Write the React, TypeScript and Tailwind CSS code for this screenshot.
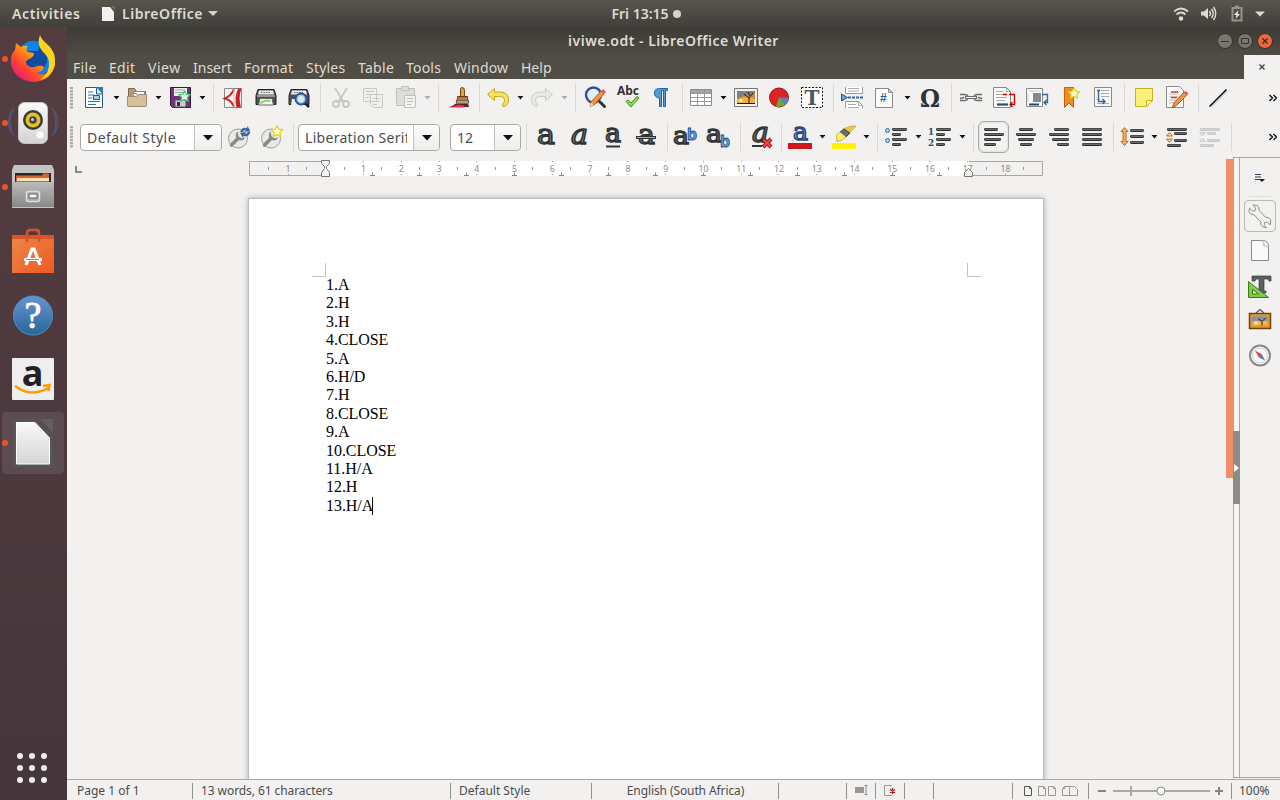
import React from "react";

const ink = "#2e3436";

function Glyph({ ch = "a", x = 2, y = 19, size = 28, width = 18, italic = false, fill = "#777c7d", stroke = ink }: { ch?: string; x?: number; y?: number; size?: number; width?: number; italic?: boolean; fill?: string; stroke?: string }) {
  return (
    <text x={x} y={y} fontSize={size} textLength={width} lengthAdjust="spacingAndGlyphs" fontFamily="DejaVu Serif, serif" fontStyle={italic ? "italic" : "normal"} fill={fill} stroke={stroke} strokeWidth="1.500">
      {ch}
    </text>
  );
}

function Bars({ rows }: { rows: [number, number, number][] }) {
  return (
    <g>
      {rows.map(([x, y, w]) => (
        <g key={y}>
          <rect x={x} y={y} width={w} height="3" rx="1.4" fill="#2a2e2f" />
          <rect x={x + 1} y={y + 0.7} width={w - 2} height="1" fill="#868888" />
        </g>
      ))}
    </g>
  );
}

const sheet = <path d="M3.5 2.5h13l4 4v15h-17z" fill="#fafafa" stroke="#888a85" />;
const fold = <path d="M16.5 2.5v4h4z" fill="#d3d7cf" stroke="#888a85" />;
const star = <path d="m17.5 1.500 1.800 3.200 3.700.6-2.600 2.700.5 3.600-3.400-1.600-3.400 1.600.5-3.600L12 5.300l3.700-.6z" />;
const wrenchDisc = (
  <g>
    <circle cx="11" cy="13.500" r="9.500" fill="#e9eae7" stroke="#9b9d99" />
    <path d="m4.500 20 6.500-6.500" stroke="#878a87" strokeWidth="3.600" strokeLinecap="round" />
    <path d="M11 6.500q-3 2-2 5.500 1 3.500 5 3.500 3 0 4-3l-3 .8-3-1.300-1-2.800z" fill="#878a87" />
  </g>
);

const art: Record<string, React.ReactNode> = {
  new: (
    <g>
      <path d="M3.500 1.500h12l5 6v14h-17z" fill="#fff" stroke="#1b5f8c" />
      <path d="M14 1h7v7z" fill="#2b7db0" />
      <path d="M14.500 2v6h6" fill="#dcecf5" stroke="#1b5f8c" />
      <path d="M6 6h5M6 9h6M6 12h4M6 15.500h12M6 18.500h8" stroke="#31789f" strokeWidth="1.200" />
      <path d="M11.500 9.500h6v4h-6z" fill="#9fd0ef" stroke="#17608f" />
    </g>
  ),
  open: (
    <g>
      <path d="M3.500 20.500v-18h6l2 3h9v15z" fill="#b59a70" stroke="#7e6b4d" />
      <path d="M8.500 5.500h11v9h-11z" fill="#fff" stroke="#888" />
      <path d="M6.500 7.500h5l1 2v2" fill="#eee" stroke="#888" />
      <path d="M2.500 10.500h9l2-2h8v11q0 1-1 1h-17q-1 0-1-1z" fill="#d6c09c" stroke="#a38c68" />
    </g>
  ),
  save: (
    <g>
      <path d="M2.500 1.500h20v20h-18l-2-2z" fill="#75307f" stroke="#3c1545" />
      <path d="M6 2h13v8H6z" fill="#eee" />
      <path d="M7 4h10M7 6.500h8" stroke="#aaa" />
      <path d="M7 14h11v7H7z" fill="#ccc" stroke="#555" />
      <path d="M9 16h3v4H9z" fill="#4c1859" />
      <g transform="translate(-1 3.500)" fill="#fff" stroke="#38d365" strokeWidth="1.300">{star}</g>
    </g>
  ),
  pdf: (
    <g>
      <path d="M4.500 2.500h17v19h-17z" fill="#f5f3f2" stroke="#8a8a8a" />
      <path d="M15.500 2.500h6Q18 11 21 21.500h-4.500Q14 11 18 3z" fill="#cc2024" />
      <path d="M14 3Q12 9 5 12.500q6 1.500 9 8" fill="none" stroke="#cc2024" strokeWidth="2" />
      <path d="M14 3v17" stroke="#e8b9ba" />
    </g>
  ),
  print: (
    <g>
      <path d="M4 3.500h16l2 6v9H2v-9z" fill="#4c5152" stroke="#222" />
      <path d="M5 4.500h14l1 4H4z" fill="#ececea" />
      <path d="M7 6.500h10" stroke="#666" strokeDasharray="1.500 1" />
      <path d="M3 10h18" stroke="#ddd" />
      <path d="M6 12.500h12l1.500 6.500h-15z" fill="#f8f8f6" stroke="#666" />
      <path d="M6.500 17.500q4-4 10-2.500" stroke="#8bd27b" strokeWidth="2" fill="none" />
    </g>
  ),
  preview: (
    <g>
      <path d="M4 3.500h16l2 6v9H2v-9z" fill="#4c5152" stroke="#222" />
      <path d="M5 4.500h14l1 4H4z" fill="#ececea" />
      <path d="M7 6.500h10" stroke="#666" strokeDasharray="1.500 1" />
      <path d="M5 13h10v6H4z" fill="#eee" />
      <circle cx="14" cy="13" r="5.500" fill="#abc5e5" stroke="#2b51a3" strokeWidth="2" />
      <circle cx="14" cy="13" r="3" fill="#dcefdc" />
      <path d="m18.500 17.500 3.500 3.500" stroke="#222" strokeWidth="2.500" />
    </g>
  ),
  cut: (
    <g fill="none" stroke="#c6c7c5" strokeWidth="1.800">
      <path d="m6 2 8 13M18 2l-8 13" />
      <circle cx="7" cy="18" r="3" />
      <circle cx="17" cy="18" r="3" />
      <path d="m10 16 2-2 2 2" />
    </g>
  ),
  copy: (
    <g fill="#f0f0ef" stroke="#c6c7c5">
      <path d="M2.500 2.500h13v13h-13zM9.500 8.500h12v13h-9l-3-3z" />
      <path d="M5 5.500h8M5 8.500h4M5 11.500h3M12 12.500h7M12 15.500h7M12 18.500h4" />
    </g>
  ),
  paste: (
    <g fill="#dddddb" stroke="#c0c1bf">
      <path d="M2.500 2.500h18v17h-18z" />
      <path d="M7.500.5h7v4h-7z" />
      <path d="M10.500 9.500h11v12h-11z" fill="#f2f2f0" />
      <path d="M13 12.500h6M13 15.500h6M13 18.500h4" />
    </g>
  ),
  brush: (
    <g>
      <path d="M15 1.500q2.500 0 2.500 3v7h-4v-8q0-2 1.500-2z" fill="#dfa04f" stroke="#754214" />
      <path d="M10.500 12.500v-2h10v2l1 3h-12z" fill="#b77a37" stroke="#623810" />
      <path d="M9.500 15h12v2h-12z" fill="#eee" stroke="#555" />
      <path d="M9 17.500h12l1 3.500H2q4-1 7-3.500z" fill="#5b2027" />
      <path d="M0 21.500h18l-1-2-6-1q-3 2-11 3z" fill="#f03246" />
    </g>
  ),
  undo: <path d="M1.500 8.500 8.500 2.500v3.500H15q7.500 1 7.500 7.500t-5.500 7l-.5-2.500q2.500-1.500 2-4.500t-4-3H8.500v4z" fill="#f5e06a" stroke="#c4a80c" />,
  redo: <path d="M22.500 8.500 15.500 2.500v3.500H9q-7.500 1-7.500 7.500t5.500 7l.5-2.500q-2.500-1.500-2-4.500t4-3h6v4z" fill="#e9eae8" stroke="#cacbc9" />,
  find: (
    <g>
      <circle cx="10.500" cy="9" r="7.500" fill="#e3eef7" stroke="#2c529b" strokeWidth="2.400" />
      <path d="m17 16 4.500 4.500" stroke="#303336" strokeWidth="3" strokeLinecap="round" />
      <path d="m8 16 10-11 3 3L11 19l-4 1.500z" fill="#f7953e" stroke="#9e4e14" strokeWidth=".8" />
      <path d="m18 5 2-2 3 3-2 2z" fill="#e45763" />
      <path d="m8 16.500 2.500 2.500-3.500 1.500z" fill="#f7dfac" />
    </g>
  ),
  spell: (
    <g>
      <text x="1" y="9" fontSize="12" textLength="22" lengthAdjust="spacingAndGlyphs" fontWeight="bold" fontFamily="Noto Sans, sans-serif" fill="#333">Abc</text>
      <path d="m10 15.500 2-1.500 3 3 6-6.500 2 1.500-8 9z" fill="#8be052" stroke="#3c8e13" />
    </g>
  ),
  pilcrow: <path d="M18.500 2.500h-8q-5 0-5 4.500t5 5v8.500h2v-16h2v16h2v-16h2z" fill="#549bd2" stroke="#1e659c" />,
  table: (
    <g>
      <path d="M1.500 3.500h21v16h-21z" fill="#fff" stroke="#8a8d8a" />
      <path d="M2 4h20v3H2z" fill="#a2a5a5" />
      <path d="M2 7.500h20M2 11.500h20M2 15.500h20M8.500 4v15M15.500 4v15" stroke="#959895" />
    </g>
  ),
  image: (
    <g>
      <path d="M.5 2.500h23v18H.5z" fill="#f4f4f2" stroke="#777" />
      <path d="M3 5h18v13H3z" fill="#c98a45" />
      <path d="M3 5h18v3q-9 0-18 5z" fill="#7d7f86" />
      <path d="M3 13q9-4 18 0v5H3z" fill="#f0ac46" />
      <circle cx="7" cy="14.500" r="1.800" fill="#fff178" />
      <path d="M15 18v-6l-5-4m5 4 4-5m-3 3-2-4M3 17.500h18" stroke="#281a12" fill="none" />
    </g>
  ),
  chart: (
    <g>
      <circle cx="12" cy="11.500" r="9.500" fill="#dc2227" stroke="#a40e12" />
      <path d="M12 11.500h9.500q0 5-3.500 7.500z" fill="#5581bd" />
      <path d="m12 11.500-3 9q5 1 9-1.500z" fill="#70ac31" />
    </g>
  ),
  textbox: (
    <g>
      <rect x="1.500" y="1.500" width="21" height="20" fill="#fff" stroke="#111" strokeDasharray="2 1.500" />
      <text x="4.500" y="18.500" fontSize="20" textLength="15" lengthAdjust="spacingAndGlyphs" fontFamily="DejaVu Serif, serif" fontWeight="bold" fill="#50585a">T</text>
    </g>
  ),
  pagebreak: (
    <g>
      <path d="M5.500 1v6.500h17V1M5.500 22.500v-7h13l4 4v3" fill="#fff" stroke="#999" />
      <path d="M8 2.500h11M8 5h11M8 18.500h8M8 21.500h11M18.500 15.500v4h4" stroke="#aaa" fill="none" />
      <path d="M1.500 8v7l6-3.500z" fill="#729fcf" stroke="#285694" />
      <path d="M8 11.500h15" stroke="#3366a8" strokeWidth="2" strokeDasharray="3 1" />
    </g>
  ),
  field: (
    <g>
      {sheet}{fold}
      <text x="8" y="16" fontSize="12" fontWeight="bold" fontFamily="Liberation Sans, sans-serif" fill="#2d5e9b">#</text>
    </g>
  ),
  omega: <text x="2" y="20.500" fontSize="25" textLength="20" lengthAdjust="spacingAndGlyphs" fontFamily="DejaVu Serif, serif" fontWeight="bold" fill={ink}>Ω</text>,
  link: (
    <g fill="none" stroke="#6c706d" strokeWidth="1.400">
      <path d="M1 8.500h4.500q3.500 0 3.500 3t-3.500 3H1M23 8.500h-4.500q-3.500 0-3.500 3t3.500 3H23" />
      <path d="M6 11.500h12" strokeWidth="3" />
      <path d="M7 11.500h10" stroke="#f4f4f4" strokeWidth="1" />
      <path d="m5 11.500-4 1M19 11.500l4 1" />
    </g>
  ),
  footnote: (
    <g>
      <path d="M1.500 1.500h13l4 4v16h-17z" fill="#fafafa" stroke="#888" />
      <path d="M14.500 1.500v4h4M4 5.500h7M4 8.500h7M4 11.500h11M4 14.500h9" stroke="#aaa" fill="none" />
      <path d="M5 18.500h11" stroke="#204a87" strokeWidth="2.200" />
      <path d="M17 8.500h5.500v10H18m2.500-2.500-2.500 2.500 2.500 2.500M11 8.500h4" stroke="#c00" strokeWidth="1.300" fill="none" />
    </g>
  ),
  endnote: (
    <g>
      <path d="M1.500 2.500h16v18h-16z" fill="#fafafa" stroke="#888" />
      <path d="M8 7h8v9H8z" fill="#858987" />
      <path d="M4 5h11M3 8v8" stroke="#ccc" />
      <path d="M4 18.500h10" stroke="#204a87" strokeWidth="2" />
      <path d="M17 8.500h5.500v8H19m2.500-2.500-2.500 2.500 2.500 2.500" stroke="#3465a4" strokeWidth="1.300" fill="none" />
    </g>
  ),
  bookmark: (
    <g>
      <path d="M5.500 1.500h9v20l-4.500-4.500-4.500 4.500z" fill="#f18a22" stroke="#ca5e0c" />
      <g transform="translate(-2.500 .5)" fill="#fff9b8" stroke="#edc918" strokeWidth="1.200">{star}</g>
    </g>
  ),
  crossref: (
    <g>
      <path d="M3.500 1.500h17v19h-17z" fill="#f7f7f6" stroke="#888a85" />
      <path d="M10 4.500h8M10 7.500h8M10 10.500h8M6 13.500h3M6 17.500h12" stroke="#aaa" />
      <path d="M6 4.500h3M7.500 4.500v11H14m-2.500-2.500 2.500 2.500-2.500 2.500" stroke="#3465a4" strokeWidth="1.400" fill="none" />
    </g>
  ),
  note: (
    <g>
      <path d="M3.500 2.500h17v12l-6 6h-11z" fill="#fbf07a" stroke="#c7b322" />
      <path d="M20.500 14.500h-6v6z" fill="#fffbc4" stroke="#c7b322" />
    </g>
  ),
  track: (
    <g>
      <path d="M1.500.5h13l4 4v17h-17z" fill="#fafafa" stroke="#888" />
      <path d="M4 8h9M4 11h11M4 14h8M4 17h5" stroke="#bbb" />
      <path d="M6 6h7M6 11.500h6" stroke="#e33" strokeWidth="1.500" />
      <path d="m9 17 10-11 3 3-11 11-4 1.500z" fill="#f0943e" stroke="#a34d19" strokeWidth=".8" />
      <path d="m19 6 2-1 2.500 3-1.500 1z" fill="#e45763" />
    </g>
  ),
  line: (
    <g>
      <path d="M5 21 21 5" stroke="#ccc" strokeWidth="1.500" />
      <path d="M3.500 20.500 20.500 3.500" stroke="#000" strokeWidth="1.200" />
    </g>
  ),
  bold: <Glyph x={3} />,
  italic: <Glyph italic x={3} width={17} />,
  underline: <g><Glyph x={4} y={17} size={26} width={16} /><path d="M5 21.500h14" stroke={ink} strokeWidth="2" /></g>,
  strike: <g><Glyph x={4} width={17} /><path d="M2 12.500h20" stroke={ink} strokeWidth="3" /><path d="M3 12.500h18" stroke="#aaa" /></g>,
  sup: <g><Glyph x={0} y={19} size={25} width={16} /><text x="14" y="15" fontSize="16" fontWeight="bold" fontFamily="Noto Sans, sans-serif" fill="#729fcf" stroke="#204a87" strokeWidth=".8">b</text></g>,
  sub: <g><Glyph x={0} y={17} size={25} width={16} /><text x="14" y="22" fontSize="16" fontWeight="bold" fontFamily="Noto Sans, sans-serif" fill="#729fcf" stroke="#204a87" strokeWidth=".8">b</text></g>,
  clear: <g><Glyph italic x={3} y={17} size={27} width={17} /><path d="M3 21h10" stroke={ink} strokeWidth="2" /><path d="m14 14 8 8m0-8-8 8" stroke="#9e1017" strokeWidth="4" /><path d="m14.500 14.500 7 7m0-7-7 7" stroke="#f5454b" strokeWidth="2" /></g>,
  color: <g><Glyph x={5} y={15} size={25} width={15} fill="#8fb5de" stroke="#204a87" /><path d="M0 18h24v6H0z" fill="#cf181d" /></g>,
  highlight: <g><path d="m11 4 8-3h5L14 12z" fill="#e9c93f" stroke="#c8a524" strokeWidth=".7" /><path d="m8 7 6 5 4-4-6-4z" fill="#666b6c" stroke="#333" strokeWidth=".8" /><path d="m4.500 10 3.500-3 6 5-4 3-5 1.500z" fill="#fff17a" stroke="#c4a000" strokeWidth=".8" /><path d="M0 18h24v6H0z" fill="#fff200" /></g>,
  bullets: <g><Bars rows={[[8, 3, 15], [8, 8, 9], [8, 13, 15], [8, 18, 9]]} /><circle cx="3.500" cy="5.500" r="2" fill="#b6d2ee" stroke="#3465a4" /><circle cx="3.500" cy="15.500" r="2" fill="#b6d2ee" stroke="#3465a4" /></g>,
  numbers: <g><Bars rows={[[8, 3, 15], [8, 8, 9], [8, 13, 15], [8, 18, 9]]} /><text x="0" y="9.500" fontSize="10" textLength="6" lengthAdjust="spacingAndGlyphs" fontWeight="bold" fontFamily="DejaVu Serif, serif" fill="#204a87">1</text><text x="0" y="21" fontSize="10" textLength="6" lengthAdjust="spacingAndGlyphs" fontWeight="bold" fontFamily="DejaVu Serif, serif" fill="#204a87">2</text></g>,
  left: <Bars rows={[[2, 3, 14], [2, 8, 20], [2, 13, 17], [2, 18, 12]]} />,
  center: <Bars rows={[[5, 3, 14], [2, 8, 20], [4, 13, 16], [6, 18, 12]]} />,
  right: <Bars rows={[[7, 3, 15], [2, 8, 20], [5, 13, 17], [10, 18, 12]]} />,
  justify: <Bars rows={[[2, 3, 20], [2, 8, 20], [2, 13, 20], [2, 18, 20]]} />,
  spacing: <g><Bars rows={[[10, 4, 14], [10, 10, 14], [10, 16, 14]]} /><path d="m4.500 2.500 3.500 4H6v10h2l-3.500 4-3.500-4h2v-10H1z" fill="#f5ae67" stroke="#c66a19" /></g>,
  increase: <g><Bars rows={[[2, 3, 20], [9, 7, 13], [9, 14, 13], [2, 19, 14]]} /><path d="m4.500 7.500 3 3.500h-6zM1.500 14h6l-3 3.500z" fill="#ffd6a8" stroke="#c66a19" /></g>,
  decrease: <g opacity=".22"><Bars rows={[[2, 3, 20], [9, 7, 9], [9, 14, 13], [2, 19, 14]]} /><path d="M1.500 7.500h6l-3 3.500zM4.500 13l3 3.500h-6z" fill="#aaa" stroke="#555" /></g>,
  update: <g>{wrenchDisc}<path d="M13.500 7q1.500-5.500 7-3.500V1.500l2.500 4.500-5 .5 1.500-1.500q-3-1-4 2zM23 7q-1.500 5.500-7 3.500v2L13.500 8l5-.5L17 9q3 1 4-2z" fill="#3465a4" stroke="#204a87" strokeWidth=".4" /></g>,
  newstyle: <g>{wrenchDisc}<g transform="translate(-.5 -.5)" fill="#fffde0" stroke="#ead51a" strokeWidth="1.400">{star}</g></g>,
  wrench: <path d="M1.500 4.500 5 7.500l2.500-.5.500-2.500L5.500 1q4.500-.5 6 2.500v3l7 7.500q4-.5 5.500 3l-.5 5-3-3-3 .5-.5 3 2.500 2.500q-4.500 0-6-3v-3l-7-7.500q-4.500 0-5.500-3.500z" fill="#f1f1f0" stroke="#8a8a88" transform="translate(0 0) scale(.95)" />,
  page: <g><path d="M3.500 1.500h12q5 1 5 6v14h-17z" fill="#fafafa" stroke="#8b8b89" /><path d="M14 1.500q3 2 1.500 5.500 4-1 5 2" fill="#eee" stroke="#bbb" /></g>,
  styles: <g><path d="M4 1h19v5h-2l-1-2h-4v12h2v2H9v-2h2V4H8L7 6H4z" fill="#5a5f61" stroke="#3a3e40" strokeWidth=".7" /><path d="M.5 6.500v16h20z" fill="#83c94e" stroke="#397b12" /><path d="M4.500 14.500v4.500h6z" fill="#edf5e6" stroke="#397b12" /></g>,
  gallery: <g><path d="m8 5 4-3.500L16 5" fill="none" stroke="#555" strokeWidth="1.300" /><path d="M1.500 5.500h21v15h-21z" fill="#d79a3c" stroke="#73440a" strokeWidth="1.500" /><path d="M4.500 8.500h15v9h-15z" fill="#7f93ad" /><path d="M4.500 13h15v4.500h-15z" fill="#f6b548" /><path d="M14 17.500v-4l-4-3m4 3 3.500-3.500" stroke="#332010" fill="none" /><circle cx="8" cy="15" r="1.500" fill="#ffef7c" /></g>,
  compass: <g><circle cx="12" cy="11.500" r="10" fill="#fff" stroke="#858a87" strokeWidth="2" /><circle cx="12" cy="11.500" r="7.500" fill="#f6f7f9" stroke="#ccc" /><path d="m7 6.500 7 4-3 3z" fill="#dd3b45" /><path d="m17 16.500-6-3 3-3z" fill="#507eb4" /></g>,
};

function Icon({ n, c = "" }: { n: string; c?: string }) {
  return <svg viewBox="0 0 24 24" className={`h-6 w-6 shrink-0 overflow-visible ${c}`}>{art[n]}</svg>;
}

function Sep({ c }: { c: string }) {
  return <div className={`h-7 w-px shrink-0 bg-[#d9d8d5] ${c}`} />;
}

function Drop({ c, dim = false }: { c: string; dim?: boolean }) {
  return <svg viewBox="0 0 6 4" className={`h-1 w-1.5 shrink-0 ${c}`}><path d="M.5 0h6l-3 3.600z" fill={dim ? "#aaa" : "#111"} /></svg>;
}

function Grip() {
  return <svg viewBox="0 0 4 24" className="ml-[3px] h-6 w-1 shrink-0"><path d="M1.500 1v22" stroke="#aaa9a6" strokeWidth="3" strokeDasharray="2.200 1" /></svg>;
}

function Combo({ text, c, box }: { text: string; c: string; box: string }) {
  return (
    <div className={`mt-px flex h-[27px] shrink-0 rounded border border-[#a9a8a3] bg-white ${c}`}>
      <div className={`flex items-center overflow-hidden whitespace-nowrap border-r border-[#c4c2be] pl-1.5 text-[14px] text-[#4c4c4c] ${box}`}><span className="block overflow-hidden">{text}</span></div>
      <div className="flex flex-1 items-center justify-center rounded-r bg-gradient-to-b from-[#fbfbfa] to-[#efeeed]">
        <svg viewBox="0 0 10 6" className="h-1.5 w-2.5"><path d="M0 0h10L5 5.500z" fill="#111" /></svg>
      </div>
    </div>
  );
}

function Ruler() {
  const zero = 76.8;
  const cm = 37.76;
  const nums = [-1, 1, 2, 3, 4, 5, 6, 7, 8, 9, 10, 11, 12, 13, 14, 15, 16, 17, 18];
  const halves = Array.from({ length: 21 }, (_, i) => -1.5 + i);
  const tabs = Array.from({ length: 13 }, (_, i) => 123.4 + i * 47.25);
  return (
    <svg viewBox="0 0 795 18" className="block h-[18px] w-[795px]">
      <path d="M77 1h643v15H77z" fill="#fff" />
      <path d="M77 1.500H.5v14H77M720 1.500h73.500v14H720" fill="none" stroke="#aaa8a5" />
      {nums.map((n) => (
        <g key={n}>
          <path d={`M${Math.floor(zero + n * cm) + 0.5} 1v1m0 12v1`} stroke="#999" />
          <text x={zero + n * cm} y="12" textAnchor="middle" fontSize="9.500" textLength={Math.abs(n) > 9 ? 10 : 5} lengthAdjust="spacingAndGlyphs" fontFamily="Noto Sans, sans-serif" fill="#8c8a86">{Math.abs(n)}</text>
        </g>
      ))}
      {halves.map((n) => <path key={n} d={`M${Math.round(zero + n * cm) - 0.5} 7v3`} stroke="#999" />)}
      {tabs.map((x) => <path key={x} d={`M${Math.floor(x) - 2} 15.500h5m-2.500 0v-3`} stroke="#888683" fill="none" />)}
      <path d="M72.500.5h8v3l-3 3v2l3 4v4h-8v-4l3-4v-2l-3-3zM719.500 8.500l4 4v4h-8v-4z" fill="#f4f4f2" stroke="#777570" />
    </svg>
  );
}

const lines = ["1.A", "2.H", "3.H", "4.CLOSE", "5.A", "6.H/D", "7.H", "8.CLOSE", "9.A", "10.CLOSE", "11.H/A", "12.H", "13.H/A"];

function DockItem({ children, running = false, active = false }: { children: React.ReactNode; running?: boolean; active?: boolean }) {
  return (
    <div className="flex h-16 w-full items-center">
      <div className={`relative ml-0.5 flex h-[62px] w-[62px] items-center justify-center rounded ${active ? "bg-[#5c4b50]" : ""}`}>
        {running && <span className="absolute left-0 h-[6px] w-[6px] rounded-full bg-[#e95420]" />}
        <svg viewBox="0 0 48 48" className="h-12 w-12 overflow-visible">{children}</svg>
      </div>
    </div>
  );
}

function Dock() {
  return (
    <nav className="flex w-[67px] shrink-0 flex-col bg-gradient-to-b from-[#543d41] to-[#45363b]">
      <svg className="h-0 w-0">
        <defs>
          <linearGradient id="ff" x1=".9" y1=".1" x2=".1" y2=".9"><stop stopColor="#ffe226" /><stop offset=".4" stopColor="#ff9a13" /><stop offset=".7" stopColor="#ff452e" /><stop offset="1" stopColor="#e31587" /></linearGradient>
          <linearGradient id="metal" x2="0" y2="1"><stop stopColor="#f9f9f9" /><stop offset="1" stopColor="#d4d4d4" /></linearGradient>
          <linearGradient id="steel" x2="0" y2="1"><stop stopColor="#bbb" /><stop offset="1" stopColor="#888" /></linearGradient>
          <linearGradient id="orange" x2="1" y2="1"><stop stopColor="#eb8848" /><stop offset="1" stopColor="#ef5a22" /></linearGradient>
          <linearGradient id="blue" x2="0" y2="1"><stop stopColor="#6794cf" /><stop offset="1" stopColor="#25689a" /></linearGradient>
        </defs>
      </svg>
      <DockItem running>
        <circle cx="25" cy="24" r="18" fill="#0a84e8" />
        <circle cx="25" cy="24" r="13" fill="#114a9f" />
        <path d="M17 7.500Q24 4 31 8l-2 8H17z" fill="#0a84e8" />
        <path d="M38 11q9 9 8 19-4 16-21 17Q6 46 2 29q-1-9 4-14l1-7 5 4q3-2 7-1-3 4 0 6l6 1q0 4-5 6-5 2-2 6 5 4 10 1 5-1 7 1-1 5-8 6 8 4 14-2 5-6 1-14-4-7-3-11z" fill="url(#ff)" />
        <path d="M31 0q1 4 7 9 11 10 7 23-4 11-14 13 10-7 9-18-1-6-6-10-7-8-3-17z" fill="#ffd21e" />
      </DockItem>
      <DockItem running>
        <g fill="none" stroke="#4f6084"><path d="M5 9q-8 14 0 28M2 12q-5 12 0 22M43 9q8 14 0 28M46 12q5 12 0 22" /></g>
        <rect x="9.500" y="3.500" width="29" height="41" rx="6" fill="url(#metal)" stroke="#c4c4c4" />
        <circle cx="24" cy="21" r="10" fill="#3b3b32" />
        <circle cx="24" cy="21" r="7.500" fill="#dfc22d" />
        <circle cx="24" cy="21" r="3.800" fill="#444" />
        <circle cx="23.500" cy="20.500" r="1.500" fill="#ccc" />
        <circle cx="31" cy="36" r="3.500" fill="#fff" />
        <circle cx="16" cy="36.500" r="2" fill="none" stroke="#d5d5d5" />
      </DockItem>
      <DockItem running>
        <path d="M5 2h38l2 5v38H3V7z" fill="#c4c4c4" /><path d="M6 10h36v10H6z" fill="#29292b" /><path d="M7 12.500h26l1-2h6v9H7z" fill="#d86429" /><path d="M8 15h32v3H8z" fill="#ffe0b8" /><path d="M3 19h42v25H3z" fill="url(#steel)" /><rect x="17.500" y="28.500" width="13" height="10" rx="2" fill="#aaa" stroke="#dedede" strokeWidth="1.500" /><path d="M20 31h8v4h-8z" fill="#f4f4f4" stroke="#666" />
      </DockItem>
      <DockItem>
        <path d="M3 8h42v38H3z" fill="url(#orange)" /><path d="M3 8h42v4H3z" fill="#d95525" /><path d="M18 15V6q0-3 3-3h6q3 0 3 3v9" fill="none" stroke="#d5542c" strokeWidth="2.500" /><path d="m17 38 6-16h2l6 16M15 32.500h18" fill="none" stroke="#fff" strokeWidth="3.200" /><path d="M17 32.500h13" stroke="#ed6c31" strokeWidth="1" />
      </DockItem>
      <DockItem>
        <circle cx="24" cy="24.500" r="19.500" fill="url(#blue)" stroke="#5a8fc4" /><text x="24" y="37" textAnchor="middle" fontFamily="Liberation Serif, serif" fontSize="38" fill="#fff" stroke="#fff" strokeWidth=".8">?</text>
      </DockItem>
      <DockItem>
        <rect x="3" y="3" width="42" height="42" rx="1" fill="#eee" /><text x="23.500" y="31" textAnchor="middle" fontFamily="Noto Sans, sans-serif" fontWeight="bold" fontSize="36" fill="#222">a</text><path d="M6 31q16 12 33 2M34 31l6.500-1-1 6" fill="none" stroke="#ff9900" strokeWidth="2.400" />
      </DockItem>
      <DockItem running active>
        <path d="M31 0h13v14z" fill="#5e605f" /><path d="M6 0h19l19 18v28q0 2-2 2H6q-2 0-2-2V2q0-2 2-2z" fill="#555756" /><path d="M7.500 3.500H26L40.500 19v26h-33z" fill="url(#metal)" stroke="#fff" />
      </DockItem>
      <div className="mt-auto flex h-[65px] items-center justify-center pr-[3px]">
        <svg viewBox="0 0 30 30" className="h-[30px] w-[30px]" fill="#eee">{[3, 15, 27].map((y) => [3, 15, 27].map((x) => <circle key={`${x}${y}`} cx={x} cy={y} r="3" />))}</svg>
      </div>
    </nav>
  );
}

function TopBar() {
  return (
    <header className="grid h-[27px] shrink-0 grid-cols-3 items-center bg-gradient-to-b from-[#58554d] to-[#403f3a] text-[14px] font-semibold text-[#dfdbd2]">
      <div className="flex items-center pl-3">
        <span className="w-[90px] tracking-[0.6px]">Activities</span>
        <svg viewBox="0 0 14 16" className="h-4 w-3.5"><path d="M0 1h8l4 5v9H0z" fill="#f2f1f0" /><path d="M9 0h4v5z" fill="#6c6b66" /></svg>
        <span className="ml-1.5 w-[86px] tracking-[0.55px]">LibreOffice</span>
        <svg viewBox="0 0 10 5" className="h-[5px] w-2.5"><path d="M0 0h10L5 5z" fill="#d5d1c8" /></svg>
      </div>
      <div className="flex items-center justify-center pl-3"><span>Fri 13:15</span><span className="ml-1 h-2 w-2 rounded-full bg-[#d5d2cb]" /></div>
      <svg viewBox="0 0 100 20" className="mr-1.5 h-5 w-[100px] justify-self-end">
        <g fill="none" stroke="#dfdbd2" strokeWidth="1.700"><path d="M0 7.500q7-6 14 0M2.500 10.500q4.500-4 9 0" /></g>
        <circle cx="7" cy="14.500" r="2.200" fill="#dfdbd2" />
        <path d="M27 7.500h3l4-3.500v11l-4-3.500h-3z" fill="#dfdbd2" /><g fill="none" stroke="#dfdbd2" strokeWidth="1.500"><path d="M35.500 7q2 2.500 0 5M37.500 5q3.500 4.500 0 9M39.500 3q4.500 6.500 0 13" /></g>
        <path d="M58.500 4h9v12.500h-9zM61 2.500h4" fill="none" stroke="#96938b" strokeWidth="2" /><path d="m64.500 6-4.500 5h2.500l-1 4 4.500-5h-2.500z" fill="#eee" /><path d="M81 7.500h10l-5 5z" fill="#dfdbd2" />
      </svg>
    </header>
  );
}

function TitleBar() {
  return (
    <div className="flex h-[27px] items-center bg-gradient-to-b from-[#3c3b37] to-[#4e4b44]">
      <div className="flex-1 pl-[62px] text-center text-[14px] font-semibold tracking-[0.5px] text-[#dfdbd2]">iviwe.odt - LibreOffice Writer</div>
      <svg viewBox="0 0 62 20" className="h-5 w-[62px]">
        <circle cx="7" cy="10" r="7.500" fill="#77756e" stroke="#302f2b" /><path d="M3 10.500h8" stroke="#33322f" /><circle cx="27" cy="10" r="7.500" fill="#77756e" stroke="#302f2b" /><path d="M23.500 7.500h7v5h-7z" fill="none" stroke="#33322f" /><circle cx="47" cy="10" r="7.500" fill="#ef6540" stroke="#302f2b" /><path d="m44.500 7.500 5 5m0-5-5 5" stroke="#42231a" strokeWidth="1.300" />
      </svg>
    </div>
  );
}

export default function App() {
  return (
    <div className="flex h-[800px] w-[1280px] flex-col overflow-hidden bg-[#f2f1f0] font-['Noto_Sans',sans-serif]">
      <TopBar />
      <div className="flex min-h-0 flex-1">
        <Dock />
        <main className="flex w-[1213px] flex-col">
          <TitleBar />
          <div className="flex h-[25px] shrink-0 items-center bg-[#504d46] pl-1.5 pt-px text-[14px] text-[#dfdbd2]">
            <span className="w-9 tracking-[0.3px]">File</span><span className="w-[39px] tracking-[0.3px]">Edit</span><span className="w-[45px] tracking-[0.5px]">View</span><span className="w-[51px]">Insert</span><span className="w-[62px] tracking-[0.3px]">Format</span><span className="w-[52px] tracking-[0.2px]">Styles</span><span className="w-12 tracking-[0.3px]">Table</span><span className="w-12 tracking-[0.2px]">Tools</span><span className="w-[67px] tracking-[0.2px]">Window</span><span>Help</span>
            <div className="ml-auto flex h-6 w-9 items-center justify-center bg-[#f2f1f0]"><svg viewBox="0 0 6 6" className="h-1.5 w-1.5"><path d="m.5.5 5 5m0-5-5 5" stroke="#444" strokeWidth="1.300" /></svg></div>
          </div>
          <div className="flex h-[39px] shrink-0 items-center pb-px">
            <Grip />
            <Icon n="new" c="ml-2" /><Drop c="ml-[7px]" /><Icon n="open" c="ml-1.5" /><Drop c="ml-1.5" /><Icon n="save" c="ml-[7px]" /><Drop c="ml-[7px]" /><Sep c="ml-2" />
            <Icon n="pdf" c="ml-1.5" /><Icon n="print" c="ml-2.5" /><Icon n="preview" c="ml-[9px]" /><Sep c="ml-[9px]" />
            <Icon n="cut" c="ml-2" /><Icon n="copy" c="ml-2" /><Icon n="paste" c="ml-[9px]" /><Drop dim c="ml-1.5" /><Sep c="ml-2" />
            <Icon n="brush" c="ml-2" /><Sep c="ml-2" /><Icon n="undo" c="ml-1.5" /><Drop c="ml-[7px]" /><Icon n="redo" c="ml-[7px]" /><Drop dim c="ml-[7px]" /><Sep c="ml-2" />
            <Icon n="find" c="ml-[7px]" /><Icon n="spell" c="ml-[9px]" /><Icon n="pilcrow" c="ml-[9px]" /><Sep c="ml-[9px]" />
            <Icon n="table" c="ml-1.5" /><Drop c="ml-[7px]" /><Icon n="image" c="ml-2" /><Icon n="chart" c="ml-[9px]" /><Icon n="textbox" c="ml-[9px]" /><Sep c="ml-[9px]" />
            <Icon n="pagebreak" c="ml-1.5" /><Icon n="field" c="ml-2" /><Drop c="ml-2" /><Icon n="omega" c="ml-2" /><Sep c="ml-[9px]" />
            <Icon n="link" c="ml-[7px]" /><Icon n="footnote" c="ml-[9px]" /><Icon n="endnote" c="ml-[9px]" /><Icon n="bookmark" c="ml-2.5" /><Icon n="crossref" c="ml-2" /><Sep c="ml-[9px]" />
            <Icon n="note" c="ml-[7px]" /><Icon n="track" c="ml-[9px]" /><Sep c="ml-[9px]" /><Icon n="line" c="ml-[7px]" />
            <More />
          </div>
          <div className="flex h-[39px] shrink-0 items-center pb-px">
            <Grip />
            <Combo text="Default Style" c="ml-1.5 w-[142px] tracking-[0.45px]" box="w-[114px]" />
            <Icon n="update" c="ml-[5px]" /><Icon n="newstyle" c="ml-[9px]" /><Sep c="ml-[9px]" />
            <Combo text="Liberation Serif" c="ml-1 w-[142px] tracking-[0.3px]" box="w-[115px] pr-1.5" />
            <Combo text="12" c="ml-2.5 w-[71px]" box="w-[44px]" /><Sep c="ml-[5px]" />
            <Icon n="bold" c="ml-[7px]" /><Icon n="italic" c="ml-2.5" /><Icon n="underline" c="ml-[9px]" /><Icon n="strike" c="ml-[9px]" /><Sep c="ml-[9px]" />
            <Icon n="sup" c="ml-[5px]" /><Icon n="sub" c="ml-[9px]" /><Sep c="ml-2.5" /><Icon n="clear" c="ml-2" /><Sep c="ml-2" />
            <Icon n="color" c="ml-1.5" /><Drop c="ml-[7px]" /><Icon n="highlight" c="ml-[7px]" /><Drop c="ml-[7px]" /><Sep c="ml-2" />
            <Icon n="bullets" c="ml-1.5" /><Drop c="ml-[7px]" /><Icon n="numbers" c="ml-[7px]" /><Drop c="ml-[7px]" /><Sep c="ml-2" />
            <div className="ml-1 flex h-8 w-[31px] shrink-0 items-center justify-center rounded-md border border-[#a9a8a3] bg-[#f4f3f2] shadow-[inset_0_0_3px_#ccc]"><Icon n="left" /></div>
            <Icon n="center" c="ml-[5px]" /><Icon n="right" c="ml-[9px]" /><Icon n="justify" c="ml-[9px]" /><Sep c="ml-[9px]" />
            <Icon n="spacing" c="ml-1.5" /><Drop c="ml-[7px]" /><Icon n="increase" c="ml-2" /><Icon n="decrease" c="ml-[9px]" /><Sep c="ml-[9px]" />
            <More />
          </div>
          <div className="flex min-h-0 flex-1">
            <section className="flex w-[1159px] flex-col overflow-hidden">
              <div className="flex h-[41px] shrink-0 pt-[3px]">
                <svg viewBox="0 0 8 8" className="ml-2 mt-1.5 h-2 w-2"><path d="M1 0v6h6" fill="none" stroke="#8b8984" strokeWidth="2" /></svg>
                <div className="ml-[166px]"><Ruler /></div>
              </div>
              <article className="ml-[181px] h-[600px] w-[796px] shrink-0 border border-[#bcbbb9] bg-white shadow-[0_0_6px_rgba(0,0,0,0.28)]">
                <div className="flex justify-between pl-[63px] pr-[61px] pt-16">
                  <svg viewBox="0 0 15 15" className="h-[15px] w-[15px]"><path d="M0 13.500h13.500V0" fill="none" stroke="#c2c2c2" /></svg>
                  <svg viewBox="0 0 15 15" className="h-[15px] w-[15px]"><path d="M14 13.500H.5V0" fill="none" stroke="#c2c2c2" /></svg>
                </div>
                <div className="-mt-[2px] pl-[77px] font-['Liberation_Serif',serif] text-[16px] leading-[18.4px] tracking-[-0.05px] text-black">
                  {lines.map((l, i) => <div key={l} className="flex h-[18.4px]"><span>{l}</span>{i === 12 && <span className="-ml-px h-[18px] w-px bg-black" />}</div>)}
                </div>
              </article>
            </section>
            <div className="mt-0.5 h-[319px] w-[7px] shrink-0 bg-[#f28f68]" />
            <div className="flex h-[621px] w-[7px] shrink-0 flex-col items-center border border-[#aaa8a5] bg-[#f5f4f3]">
              <div className="mt-[273px] flex h-[73px] w-[7px] items-center justify-center bg-[#8e8c86]"><svg viewBox="0 0 5 8" className="h-2 w-[5px]"><path d="m0 0 5 4-5 4z" fill="#fff" /></svg></div>
            </div>
            <aside className="flex h-[621px] w-10 flex-col items-center border-y border-[#aaa8a5]">
              <svg viewBox="0 0 10 12" className="mt-[14px] h-3 w-2.5"><path d="M0 2.500h6M0 5h6M0 7.500h6" stroke="#29415e" /><path d="M4 7h6l-3 3z" fill="#111c2d" /></svg>
              <div className="mt-3 h-px w-[22px] bg-[#ddd]" />
              <div className="mt-[3px] flex h-8 w-8 items-center justify-center rounded border border-[#bbb9b6]"><Icon n="wrench" /></div>
              <Icon n="page" c="mt-[7px]" /><Icon n="styles" c="mt-3" /><Icon n="gallery" c="mt-[9px]" /><Icon n="compass" c="mt-3" />
            </aside>
          </div>
          <footer className="flex h-[21px] shrink-0 items-center border-t border-[#aaa9a4] pt-px text-[12px] text-[#4c4c4c]">
            <span className="w-[125px] pl-2.5">Page 1 of 1</span><Tick />
            <span className="w-[257px] pl-2 tracking-[-0.08px]">13 words, 61 characters</span><Tick />
            <span className="w-[140px] pl-2">Default Style</span><Tick />
            <span className="w-[186px] pl-px text-center tracking-[-0.1px]">English (South Africa)</span><Tick />
            <span className="w-[67px]" /><Tick />
            <div className="flex w-7 justify-center"><svg viewBox="0 0 13 11" className="h-[11px] w-[13px]"><path d="M0 2h9v6H0z" fill="#999791" /><path d="M9.500.5h3m-1.500 0v9m-1.500 0h3" stroke="#888" /></svg></div><Tick />
            <div className="flex w-7 justify-center"><svg viewBox="0 0 12 12" className="h-3 w-3"><path d="M8 .5H.5v10h8" fill="none" stroke="#999" /><path d="M8.500 3v6M6 4.500l5 3m0-3-5 3" stroke="#c2101c" strokeWidth="1.300" /></svg></div><Tick />
            <span className="w-7" /><Tick /><span className="w-[78px]" /><Tick />
            <div className="flex w-[75px] justify-center pl-0.5"><svg viewBox="0 0 55 12" className="h-3 w-[55px]"><g fill="none" stroke="#999791"><path d="M.5 1.500h5l2 2v7h-7zM5.500 1.500v2h2" stroke="#555" /><path d="M14.500 1.500h5l2 2v7h-7zM19.500 1.500v2h2M24.500 1.500h5l2 2v7h-7zM29.500 1.500v2h2M38.500 10.500v-7l2-2h5v9zM45.500 1.500h5l3 3v6h-8zM41 1.500v2h-2" /></g></svg></div><Tick />
            <svg viewBox="0 0 142 16" className="h-4 w-[142px] shrink-0"><path d="M9 8h8M126 8h8m-4-4v8" stroke="#86847f" strokeWidth="2" /><path d="M24 8h97M42 3v10" stroke="#aaa8a5" strokeWidth="2" /><circle cx="72" cy="8" r="4" fill="#fff" stroke="#8b8984" /></svg><Tick />
            <span className="pl-[7px]">100%</span>
          </footer>
        </main>
      </div>
    </div>
  );
}

function More() {
  return <svg viewBox="0 0 8 8" className="ml-auto mr-[3px] h-2 w-2 shrink-0"><path d="m.5 1 3 3-3 3m4-6 3 3-3 3" fill="none" stroke="#111" strokeWidth="1.400" /></svg>;
}

function Tick() {
  return <div className="h-4 w-px shrink-0 bg-[#93918c]" />;
}
